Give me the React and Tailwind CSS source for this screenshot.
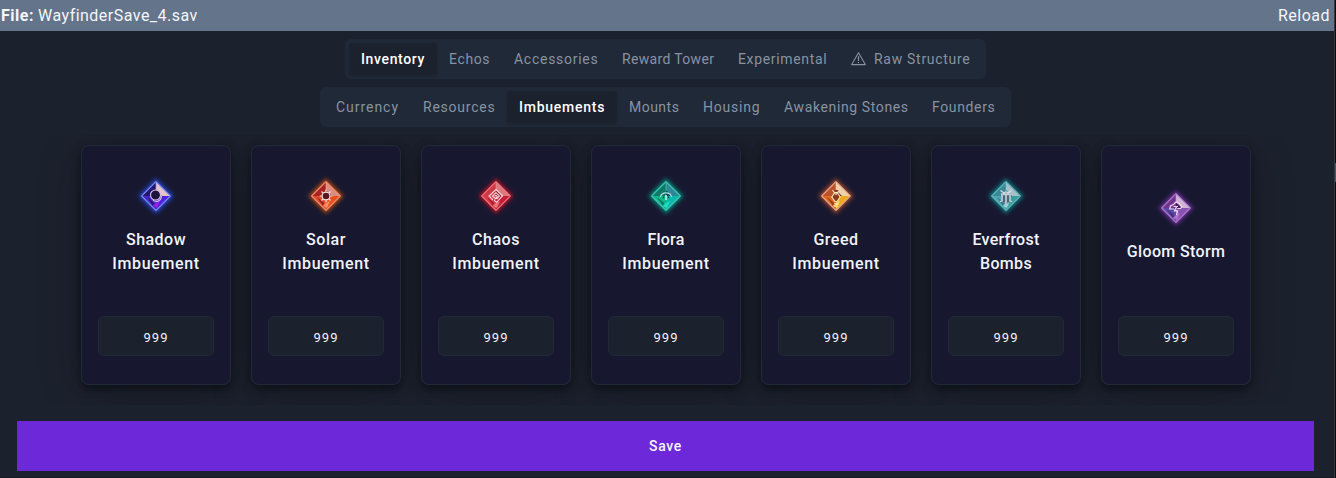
import React from "react";

function WarningIcon() {
  return (
    <svg className="mr-2 h-4 w-[15px] shrink-0" viewBox="0 0 15 16" fill="none" stroke="currentColor" strokeLinejoin="round" strokeLinecap="round">
      <path d="M7.5 1.7 L14.3 13.6 H0.7 Z" strokeWidth="1.05" />
      <path d="M7.5 5.7 V9.4" strokeWidth="1.2" />
      <path d="M7.5 11.4 V11.5" strokeWidth="1.3" />
    </svg>
  );
}

const sections = [
  { label: "Inventory", size: "w-[88px] tracking-[0.64px]", active: true },
  { label: "Echos", size: "w-[65px] tracking-[0.62px]" },
  { label: "Accessories", size: "w-[108px] tracking-[0.73px]" },
  { label: "Reward Tower", size: "w-[116px] tracking-[0.33px]" },
  { label: "Experimental", size: "w-[113px] tracking-[0.66px]" },
  { label: "Raw Structure", size: "w-[143px] tracking-[0.71px]", icon: true },
];

const categories = [
  { label: "Currency", size: "w-[87px] tracking-[0.96px]" },
  { label: "Resources", size: "w-[96px] tracking-[0.76px]" },
  { label: "Imbuements", size: "w-[110px] tracking-[0.75px]", active: true },
  { label: "Mounts", size: "w-[74px] tracking-[0.48px]" },
  { label: "Housing", size: "w-[81px] tracking-[0.8px]" },
  { label: "Awakening Stones", size: "w-[148px] tracking-[0.62px]" },
  { label: "Founders", size: "w-[87px] tracking-[0.64px]" },
];

function TabList({ tabs }) {
  return (
    <div className="flex h-10 items-center rounded-md bg-[#202937] p-1">
      {tabs.map((tab) => (
        <button
          key={tab.label}
          className={`flex h-8 items-center whitespace-nowrap rounded-sm pl-3 text-sm ${tab.size} ${
            tab.active ? "bg-[#1c212e] font-medium text-white shadow-sm" : "text-[#8793a3]"
          }`}
        >
          {tab.icon && <WarningIcon />}
          {tab.label}
        </button>
      ))}
    </div>
  );
}

/* Faceted diamond: four coloured quarters, a light rim, a glow and a sigil. */
function Gem({ glow, rim, facets, children }) {
  return (
    <svg className="h-16 w-16 shrink-0" viewBox="-32 -32 64 64" fill="none">
      <defs>
        <filter id={`blur-${glow.slice(1)}`} x="-60%" y="-60%" width="220%" height="220%">
          <feGaussianBlur stdDeviation="1.9" />
        </filter>
        <filter id="facet-soften" x="-20%" y="-20%" width="140%" height="140%">
          <feGaussianBlur stdDeviation="0.5" />
        </filter>
      </defs>
      <path d="M0 -16 L16 0 L0 16 L-16 0 Z" fill={glow} stroke={glow} strokeWidth="2" filter={`url(#blur-${glow.slice(1)})`} />
      <g filter="url(#facet-soften)">
        <path d="M0 -14 L0 0 L-14 0 Z" fill={facets[0]} />
        <path d="M0 -14 L14 0 L4 0 L0 -5 Z" fill={facets[1]} />
        <path d="M0 -6 L6 0 L0 4 Z" fill={facets[4]} />
        <path d="M-14 0 L0 0 L0 14 Z" fill={facets[2]} />
        <path d="M14 0 L0 0 L0 14 Z" fill={facets[3]} />
        <path d="M-9 1 L-2 7 L-3 10 Z" fill={facets[4]} opacity="0.7" />
        <path d="M0 7 L4 5 L1 12 L-3 10 Z" fill={facets[5]} opacity="0.85" />
        <path d="M0 -13 L0 -5" stroke={rim} strokeWidth="0.8" opacity="0.8" />
      </g>
      <path d="M0 -14.4 L14.4 0 L0 14.4 L-14.4 0 Z" stroke={rim} strokeWidth="1.1" opacity="0.85" />
      {children}
    </svg>
  );
}

const imbuements = [
  {
    name: ["Shadow", "Imbuement"],
    tracking: ["tracking-[0.47px]", "tracking-[0.62px]"],
    gem: (
      <Gem glow="#2949d8" rim="#8b9cf5" facets={["#20156f", "#e5c1c9", "#4526c9", "#5022dc", "#2b124f", "#a91df0"]}>
        <circle cx="-0.5" cy="-1" r="5" fill="#1c123d" stroke="#d8c8e0" strokeWidth="1.1" />
        <path d="M-3 4.2 C0 7 5.6 5 5.4 -0.5" stroke="#d8c8e0" strokeWidth="1.1" />
      </Gem>
    ),
  },
  {
    name: ["Solar", "Imbuement"],
    tracking: ["tracking-[0.57px]", "tracking-[0.62px]"],
    gem: (
      <Gem glow="#bd4a12" rim="#f7a183" facets={["#a92220", "#dc8d83", "#df4930", "#e9501b", "#75151d", "#f99a72"]}>
        <circle cx="0" cy="0" r="3.9" fill="#5d1620" stroke="#fae6dc" strokeWidth="1.2" />
        <path d="M0 -6.3 V-4.5 M0 4.5 V6.3 M-6.3 0 H-4.5 M4.5 0 H6.3 M-4.5 -4.5 L-3.2 -3.2 M4.5 -4.5 L3.2 -3.2 M-4.5 4.5 L-3.2 3.2 M4.5 4.5 L3.2 3.2" stroke="#fae6dc" strokeWidth="1.2" />
      </Gem>
    ),
  },
  {
    name: ["Chaos", "Imbuement"],
    tracking: ["tracking-[0.54px]", "tracking-[0.62px]"],
    gem: (
      <Gem glow="#b51627" rim="#f48989" facets={["#cf3947", "#db7a80", "#dd3748", "#c51f39", "#8d1426", "#f28589"]}>
        <path d="M-3 4 L-7 0 L0 -6.5 L6.5 0 L0.5 6.3 L-2 4 M0.5 3.2 L3.4 0 L0 -3.3 L-3.6 0 L-0.5 2.6 L1.2 0.5 L0 -0.8 L-1.2 0.4" stroke="#f3dadb" strokeWidth="1.1" />
      </Gem>
    ),
  },
  {
    name: ["Flora", "Imbuement"],
    tracking: ["tracking-[0.21px]", "tracking-[0.62px]"],
    gem: (
      <Gem glow="#07917c" rim="#4ed4c2" facets={["#087966", "#2f8795", "#10b886", "#0eb8aa", "#075062", "#20e4ce"]}>
        <path d="M-5.5 1 C-4.5 -4.5 4.5 -4.5 5.5 1" stroke="#a8e1dc" strokeWidth="1.3" />
        <path d="M0 -1 V4" stroke="#c6f1e8" strokeWidth="1.6" />
        <path d="M-3 2 L-2 0.5 M3 2 L2 0.5" stroke="#063f4b" strokeWidth="1.2" />
      </Gem>
    ),
  },
  {
    name: ["Greed", "Imbuement"],
    tracking: ["tracking-[0.49px]", "tracking-[0.62px]"],
    gem: (
      <Gem glow="#a4482f" rim="#f5c0a0" facets={["#bc512b", "#eed2a8", "#dd6a20", "#eca91e", "#7b2719", "#ffe28a"]}>
        <path d="M-3.5 -6 L-1.5 -3.4 H1.5 L3.5 -6 M-1.5 -3 L-4.2 1 L-1 5.5 H1 L4.2 1 L1.5 -3" fill="#8b3a1d" stroke="#f7e7bf" strokeWidth="1.2" />
        <path d="M0 -4 V-1 M-1.5 7.5 H1.5" stroke="#fff2cb" strokeWidth="1.2" />
      </Gem>
    ),
  },
  {
    name: ["Everfrost", "Bombs"],
    tracking: ["tracking-[0.25px]", "tracking-[0.33px]"],
    gem: (
      <Gem glow="#188084" rim="#74bfc4" facets={["#378a96", "#a9bdca", "#4fa5b2", "#399e9c", "#265b70", "#a9d8dc"]}>
        <path d="M-5 -3 H5 L4.5 6 L0 8 L-4.5 6 Z" fill="#6c8797" />
        <path d="M-5.5 -5.5 L-2 -3 L0 -4.2 L2 -3 L5.5 -5.5 M-5 -1.8 H5 M-4 -1 V5.5 M0 -2 V8 M4 -1 V5.5 M-6 5.5 L-4 5 M6 5.5 L4 5" stroke="#d6e0e6" strokeWidth="1.2" />
        <path d="M-2 0 V6 M2 0 V6" stroke="#2c5065" strokeWidth="1.1" />
      </Gem>
    ),
  },
  {
    name: ["Gloom Storm"],
    tracking: ["tracking-[0.35px]"],
    gem: (
      <Gem glow="#693099" rim="#c48bd6" facets={["#713590", "#d0b5d8", "#5a4aa8", "#8a51b4", "#481d63", "#b77ad4"]}>
        <path d="M-2 1 H-6.3 L-5.5 -2 L-2.5 -3.5 L0 -6 L3.3 -4.5 L6 -1.5 L4.5 0.5 H1.5 M-2.5 -1.5 H2" stroke="#eed8ef" strokeWidth="1.2" />
        <path d="M0.5 -1 L-1.5 2.8 H1.5 L0.5 7" stroke="#f3e3f4" strokeWidth="1.2" />
      </Gem>
    ),
  },
];

/* The shadow sits on a pseudo-element below every card, so it never darkens a neighbour. */
function ItemCard({ item }) {
  return (
    <div className="relative flex h-60 w-[150px] shrink-0 flex-col rounded-lg border border-[#202937] bg-[#171830] px-4 pt-4 before:absolute before:-inset-px before:-z-10 before:rounded-lg before:shadow-[0_4px_10px_rgba(0,0,0,0.42),0_6px_44px_rgba(0,0,0,0.24)]">
      <div className="flex h-[116px] flex-col items-center justify-center">
        {item.gem}
        {item.name.map((line, i) => (
          <span key={line} className={`whitespace-nowrap text-base font-medium text-[#f1f3f8] ${item.tracking[i]}`}>
            {line}
          </span>
        ))}
      </div>
      <input
        className="mt-[38px] h-10 w-full rounded-md border border-[#202937] bg-[#1c212e] pt-[3px] text-center text-[13px] tracking-[1px] text-[#f1f3f8] outline-none"
        defaultValue="999"
      />
    </div>
  );
}

export default function App() {
  return (
    <div className="flex h-[478px] w-[1336px] overflow-hidden bg-[#1c212e] font-['Roboto',sans-serif]">
      <div className="flex w-[1334px] flex-col">
        <header className="flex h-[31px] shrink-0 items-center justify-between bg-[#64748b] pl-px pr-1 text-base text-[#f4f6fa]">
          <div className="flex gap-1">
            <strong className="font-bold tracking-[0.52px]">File:</strong>
            <span className="tracking-[0.48px]">WayfinderSave_4.sav</span>
          </div>
          <button className="tracking-[0.48px]">Reload</button>
        </header>
        <nav className="flex flex-col items-center gap-2 pr-[3px] pt-2">
          <TabList tabs={sections} />
          <TabList tabs={categories} />
        </nav>
        <main className="isolate mt-2 flex h-[270px] shrink-0 justify-center gap-5 overflow-hidden pr-0.5 pt-2.5">
          {imbuements.map((item) => (
            <ItemCard key={item.name.join(" ")} item={item} />
          ))}
        </main>
        <button className="ml-[17px] mt-4 h-[50px] w-[1297px] shrink-0 bg-[#6d28d9] text-sm font-medium tracking-[0.68px] text-[#f4f6fa]">
          Save
        </button>
        <div className="mt-1.5 h-px bg-[#171a24]" />
      </div>
      <div className="flex w-0.5 flex-col border-l border-[#38383a] bg-[#0b0c10]">
        <div className="mt-[163px] h-[19px] bg-[#4b5261]" />
      </div>
    </div>
  );
}
